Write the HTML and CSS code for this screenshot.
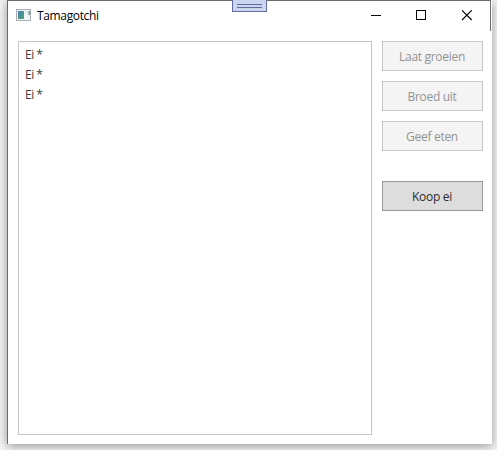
FILE: index.html
```html
<!DOCTYPE html>
<html lang="nl">
<head>
<meta charset="utf-8">
<title>Tamagotchi</title>
<link rel="stylesheet" href="styles.css">
</head>
<body>
<div class="window">
  <header class="titlebar">
    <svg class="app-icon" width="16" height="14" viewBox="0 0 16 14">
      <defs><linearGradient id="g" x1="0" y1="0" x2="1" y2="1"><stop offset="0" stop-color="#4a80b0"/><stop offset="1" stop-color="#50a477"/></linearGradient></defs>
      <rect x=".5" y="1.5" width="14" height="11" fill="#f2f4f5" stroke="#a9adb2"/>
      <rect x="2" y="3" width="6" height="8" fill="url(#g)"/>
      <rect x="9" y="3" width="3" height="3" fill="#e3e8eb"/>
      <rect x="12.5" y="3" width="1.5" height="4" fill="#5b9aa0"/>
    </svg>
    <span class="title">Tamagotchi</span>
    <svg class="controls" width="103" height="12" viewBox="0 0 103 12" fill="none" stroke="#000" shape-rendering="crispEdges">
      <path d="M0 5.5H10M45.5 .5H54.5V9.5H45.5Z"/>
      <path d="M91 .3L100.7 10M100.7 .3L91 10" shape-rendering="auto" stroke-width="1.1"/>
    </svg>
  </header>
  <main class="content">
    <ul class="list"><li>Ei *</li><li>Ei *</li><li>Ei *</li></ul>
    <div class="actions">
      <button disabled>Laat groeien</button>
      <button disabled>Broed uit</button>
      <button disabled>Geef eten</button>
      <button class="buy">Koop ei</button>
    </div>
  </main>
</div>
<div class="handle"></div>
</body>
</html>
```
FILE: styles.css
```css
*, *::before { box-sizing: border-box; }
body {
  margin: 0;
  padding-left: 7px;
  height: 450px;
  overflow: hidden;
  background: #f5f5f5;
  font: 12px/20px "Open Sans", "Noto Sans", sans-serif;
}
.window {
  width: 485px;
  height: 444px;
  background: #fff;
  box-shadow: 0 2px 10px rgba(0, 0, 0, .4);
}
.titlebar {
  width: 484px;
  height: 31px;
  display: flex;
  align-items: flex-start;
  border: 1px solid #6b6b6b;
  border-bottom: 0;
  padding-left: 8px;
}
.app-icon { margin-top: 7px; }
.title {
  margin: 5px 0 0 5px;
  color: #000;
  letter-spacing: -.35px;
}
.controls { margin: 9px 16px 0 auto; }
.content {
  display: flex;
  gap: 10px;
  height: 413px;
  padding: 10px 9px 9px 10px;
  border-left: 1px solid #6b6b6b;
}
.list {
  width: 354px;
  margin: 0;
  padding: 3px 6px;
  list-style: none;
  border: 1px solid #c3c6c8;
  color: #3c3c3c;
  letter-spacing: -.5px;
}
.actions {
  width: 101px;
  display: flex;
  flex-direction: column;
  gap: 10px;
}
button {
  height: 30px;
  padding: 2px 1px 0 0;
  font: inherit;
  letter-spacing: -.3px;
  color: #2c2c2c;
  background: #ddd;
  border: 1px solid #979999;
}
button:disabled {
  color: #939393;
  background: #f4f4f4;
  border-color: #c3c7c8;
}
.buy { margin-top: 20px; }
.handle {
  position: absolute;
  left: 232px;
  top: 0;
  width: 35px;
  height: 12px;
  background: #ccd5f0;
  border: 1px solid #636b9c;
  border-top: 0;
}
.handle::before {
  content: "";
  display: block;
  width: 25px;
  height: 4px;
  margin: 4px auto 0;
  border: solid #636b9c;
  border-width: 1px 0;
}
```
